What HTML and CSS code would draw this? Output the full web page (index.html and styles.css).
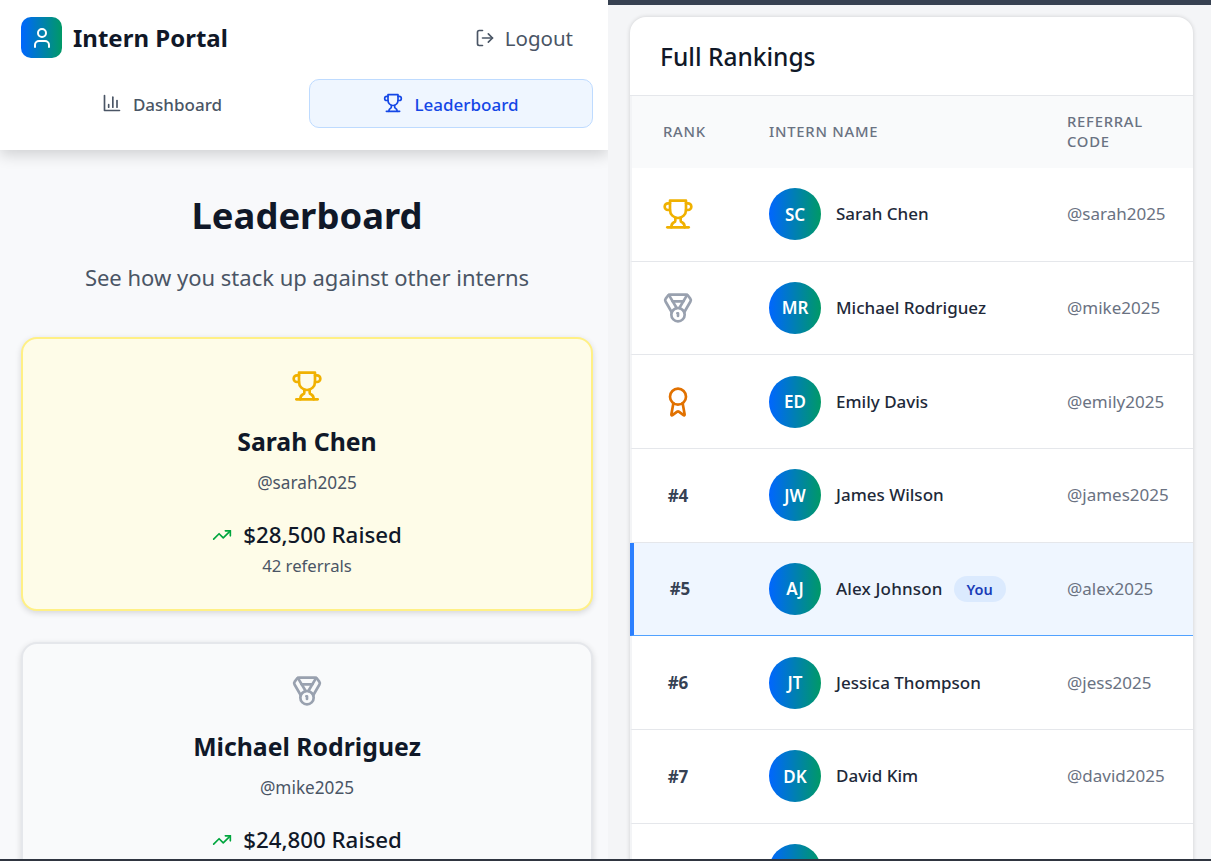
FILE: index.html
```html
<!DOCTYPE html>
<html lang="en">
<head>
<meta charset="utf-8">
<title>Intern Portal - Leaderboard</title>
<link rel="stylesheet" href="styles.css">
</head>
<body>
<svg class="sprite" aria-hidden="true">
  <symbol id="i-user" viewBox="0 0 24 24"><path d="M19 21v-2a4 4 0 0 0-4-4H9a4 4 0 0 0-4 4v2"/><circle cx="12" cy="7" r="4"/></symbol>
  <symbol id="i-logout" viewBox="0 0 24 24"><path d="M9 21H5a2 2 0 0 1-2-2V5a2 2 0 0 1 2-2h4"/><polyline points="16 17 21 12 16 7"/><line x1="21" y1="12" x2="9" y2="12"/></symbol>
  <symbol id="i-chart" viewBox="0 0 24 24"><path d="M3 3v18h18"/><path d="M18 17V9"/><path d="M13 17V5"/><path d="M8 17v-3"/></symbol>
  <symbol id="i-trophy" viewBox="0 0 24 24"><path d="M6 9H4.5a2.5 2.5 0 0 1 0-5H6"/><path d="M18 9h1.5a2.5 2.5 0 0 0 0-5H18"/><path d="M4 22h16"/><path d="M10 14.66V17c0 .55-.47.98-.97 1.21C7.85 18.75 7 20.24 7 22"/><path d="M14 14.66V17c0 .55.47.98.97 1.21C16.15 18.75 17 20.24 17 22"/><path d="M18 2H6v7a6 6 0 0 0 12 0V2Z"/></symbol>
  <symbol id="i-medal" viewBox="0 0 24 24"><path d="M7.21 15 2.66 7.14a2 2 0 0 1 .13-2.2L4.4 2.8A2 2 0 0 1 6 2h12a2 2 0 0 1 1.6.8l1.6 2.14a2 2 0 0 1 .14 2.2L16.79 15"/><path d="M11 12 5.12 2.2"/><path d="m13 12 5.88-9.8"/><path d="M8 7h8"/><circle cx="12" cy="17" r="5"/><path d="M12 18v-2h-.5"/></symbol>
  <symbol id="i-award" viewBox="0 0 24 24"><path d="m15.477 12.89 1.515 8.526a.5.5 0 0 1-.81.47l-3.58-2.687a1 1 0 0 0-1.197 0l-3.586 2.686a.5.5 0 0 1-.81-.469l1.514-8.526"/><circle cx="12" cy="8" r="6"/></symbol>
  <symbol id="i-trend" viewBox="0 0 24 24"><polyline points="22 7 13.5 15.5 8.5 10.5 2 17"/><polyline points="16 7 22 7 22 13"/></symbol>
</svg>
<main class="split">
  <section class="pane pane-left">
    <header class="topbar">
      <div class="brand-row">
        <div class="brand">
          <span class="logo"><svg class="icon icon-logo"><use href="#i-user"/></svg></span>
          <span class="brand-name">Intern Portal</span>
        </div>
        <button class="logout"><svg class="icon icon-20"><use href="#i-logout"/></svg>Logout</button>
      </div>
      <nav class="tabs">
        <a class="tab"><svg class="icon icon-20"><use href="#i-chart"/></svg>Dashboard</a>
        <a class="tab tab-active"><svg class="icon icon-20"><use href="#i-trophy"/></svg>Leaderboard</a>
      </nav>
    </header>
    <div class="intro">
      <h1 class="page-title">Leaderboard</h1>
      <p class="page-sub">See how you stack up against other interns</p>
    </div>
    <div class="podium">
      <article class="pcard pcard-gold">
        <svg class="icon pcard-icon gold"><use href="#i-trophy"/></svg>
        <h2 class="pcard-name">Sarah Chen</h2>
        <p class="pcard-code">@sarah2025</p>
        <p class="pcard-raised"><svg class="icon icon-20 trend"><use href="#i-trend"/></svg>$28,500 Raised</p>
        <p class="pcard-refs">42 referrals</p>
      </article>
      <article class="pcard pcard-silver">
        <svg class="icon pcard-icon silver"><use href="#i-medal"/></svg>
        <h2 class="pcard-name">Michael Rodriguez</h2>
        <p class="pcard-code">@mike2025</p>
        <p class="pcard-raised"><svg class="icon icon-20 trend"><use href="#i-trend"/></svg>$24,800 Raised</p>
      </article>
    </div>
  </section>
  <section class="pane pane-right">
    <div class="rankings">
      <h2 class="rankings-title">Full Rankings</h2>
      <div class="row row-head">
        <div class="th">Rank</div>
        <div class="th">Intern Name</div>
        <div class="th th-code">Referral Code</div>
      </div>
      <div class="row"><div class="rank"><svg class="icon rank-icon gold"><use href="#i-trophy"/></svg></div><div class="who"><span class="avatar">SC</span><span class="who-name">Sarah Chen</span></div><div class="code">@sarah2025</div></div>
      <div class="row"><div class="rank"><svg class="icon rank-icon silver"><use href="#i-medal"/></svg></div><div class="who"><span class="avatar">MR</span><span class="who-name">Michael Rodriguez</span></div><div class="code">@mike2025</div></div>
      <div class="row"><div class="rank"><svg class="icon rank-icon bronze"><use href="#i-award"/></svg></div><div class="who"><span class="avatar">ED</span><span class="who-name">Emily Davis</span></div><div class="code">@emily2025</div></div>
      <div class="row"><div class="rank">#4</div><div class="who"><span class="avatar">JW</span><span class="who-name">James Wilson</span></div><div class="code">@james2025</div></div>
      <div class="row row-me"><div class="rank">#5</div><div class="who"><span class="avatar">AJ</span><span class="who-name">Alex Johnson</span><span class="you">You</span></div><div class="code">@alex2025</div></div>
      <div class="row"><div class="rank">#6</div><div class="who"><span class="avatar">JT</span><span class="who-name">Jessica Thompson</span></div><div class="code">@jess2025</div></div>
      <div class="row"><div class="rank">#7</div><div class="who"><span class="avatar">DK</span><span class="who-name">David Kim</span></div><div class="code">@david2025</div></div>
      <div class="row"><div class="rank"></div><div class="who"><span class="avatar"></span></div><div class="code"></div></div>
    </div>
  </section>
</main>
</body>
</html>
```

FILE: styles.css
```css
* { box-sizing: border-box; }
html, body { margin: 0; padding: 0; }
body {
  width: 1211px;
  height: 861px;
  overflow: hidden;
  background: #2f3540;
  font-family: "Noto Sans", "Open Sans", sans-serif;
  color: #101828;
}
.sprite { display: none; }
.icon {
  fill: none;
  stroke: currentColor;
  stroke-width: 2;
  stroke-linecap: round;
  stroke-linejoin: round;
  flex: none;
  display: block;
}
.icon-20 { width: 20px; height: 20px; }
.split {
  display: grid;
  grid-template-columns: 608px 603px;
  height: 859px;
}
.pane { height: 859px; overflow: hidden; }

/* left */
.pane-left { background: #f8f9fb; }
.topbar {
  background: #fff;
  height: 150px;
  padding: 17px 15px 0 21px;
  box-shadow: 0 5px 14px rgba(0, 0, 0, .16);
  position: relative;
}
.brand-row {
  display: flex;
  justify-content: space-between;
  align-items: center;
  height: 41px;
}
.brand { display: flex; align-items: center; gap: 11px; }
.logo {
  width: 41px;
  height: 41px;
  border-radius: 10px;
  background: linear-gradient(to right, #0066ff, #009966);
  display: flex;
  align-items: center;
  justify-content: center;
  color: #fff;
}
.icon-logo { width: 24px; height: 24px; }
.brand-name { font-size: 24px; font-weight: 700; line-height: 32px; color: #101828; }
.logout {
  display: flex;
  align-items: center;
  gap: 10px;
  border: 0;
  background: none;
  padding: 0 20px 0 0;
  font: 400 20.5px/28px "Noto Sans", sans-serif;
  color: #4a5565;
}
.tabs {
  display: grid;
  grid-template-columns: 1fr 1fr;
  gap: 4px;
  margin-top: 21px;
}
.tab {
  height: 49px;
  padding-top: 1px;
  border: 1px solid transparent;
  border-radius: 10px;
  display: flex;
  align-items: center;
  justify-content: center;
  gap: 11px;
  font-size: 17px;
  font-weight: 500;
  color: #4a5565;
}
.tab .icon { margin-top: -2px; }
.tab:first-child { padding-right: 2px; }
.tab-active { background: #eff6ff; border-color: #bedbff; color: #1447e6; }
.intro { text-align: center; padding: 40px 15px 0 21px; }
.page-title { margin: 0; font-size: 36.4px; line-height: 50px; font-weight: 700; color: #101828; }
.page-sub { margin: 23px 0 0; font-size: 22px; line-height: 28px; color: #4a5565; }
.podium {
  padding: 46px 15px 0 21px;
  display: flex;
  flex-direction: column;
  gap: 31px;
}
.pcard {
  border: 2px solid;
  border-radius: 16px;
  display: flex;
  flex-direction: column;
  align-items: center;
  padding-top: 31px;
  height: 274px;
  box-shadow: 0 2px 6px rgba(0, 0, 0, .14);
}
.pcard-gold { background: #fefce8; border-color: #fff085; }
.pcard-silver { background: #f9fafb; border-color: #e5e7eb; height: 300px; }
.pcard-icon { width: 32px; height: 32px; }
.gold { color: #f0b100; }
.silver { color: #99a1af; }
.bronze { color: #e17100; }
.pcard-name { margin: 23px 0 0; font-size: 24.8px; line-height: 32px; font-weight: 700; color: #101828; }
.pcard-code { margin: 14px 0 0; font-size: 17.2px; line-height: 24px; color: #4a5565; }
.pcard-raised {
  margin: 25px 0 0;
  display: flex;
  align-items: center;
  gap: 11px;
  font-size: 22.3px;
  line-height: 30px;
  font-weight: 500;
  color: #101828;
}
.trend { color: #00a63e; }
.pcard-refs { margin: 5px 0 0; font-size: 16.7px; line-height: 22px; color: #4a5565; }

/* right */
.pane-right {
  background: #f4f5f7;
  border-top: 5px solid #374151;
  padding: 12px 18px 0 22px;
}
.rankings {
  background: #fff;
  border-radius: 16px 16px 0 0;
  box-shadow: 0 0 4px rgba(0, 0, 0, .16);
  height: 900px;
  overflow: hidden;
}
.rankings-title {
  margin: 0;
  height: 79px;
  padding: 22px 30px 0;
  font-size: 24.5px;
  line-height: 36px;
  font-weight: 500;
  color: #101828;
  border-bottom: 1px solid #e5e7eb;
}
.row {
  display: grid;
  grid-template-columns: 137px 298px 1fr;
  align-items: center;
  height: 93.67px;
  border-left: 2px solid #f3f4f6;
  border-bottom: 1px solid #e5e7eb;
}
.row-head { height: 72px; padding-bottom: 2px; background: #f9fafb; border-bottom: 0; }
.th {
  font-size: 14.8px;
  line-height: 20px;
  font-weight: 500;
  letter-spacing: .75px;
  text-transform: uppercase;
  color: #6a7282;
  padding-left: 31px;
}
.th + .th { padding-left: 0; }
.th-code { width: 90px; }
.rank {
  width: 32px;
  margin-left: 30px;
  display: flex;
  justify-content: center;
  font-size: 17px;
  font-weight: 700;
  color: #364153;
}
.rank-icon { width: 32px; height: 32px; }
.who { display: flex; align-items: center; gap: 15px; }
.avatar {
  width: 52px;
  height: 52px;
  flex: none;
  border-radius: 50%;
  background: linear-gradient(to right, #0066ff, #009966);
  color: #fff;
  font-size: 17px;
  font-weight: 600;
  display: flex;
  align-items: center;
  justify-content: center;
}
.who-name { font-size: 17px; font-weight: 500; color: #1e2939; padding-bottom: 1px; }
.you {
  margin-left: -4px;
  background: #dbeafe;
  color: #193cb8;
  font-size: 14.5px;
  font-weight: 600;
  line-height: 26px;
  padding: 0 13px;
  border-radius: 13px;
}
.code { font-size: 17px; color: #6a7282; white-space: nowrap; padding-bottom: 1px; }
.row-me {
  background: #eff6ff;
  border-left: 4px solid #2b7fff;
  border-bottom: 1px solid #51a2ff;
  grid-template-columns: 135px 298px 1fr;
}
.row-me .who-name { letter-spacing: .15px; }
```
